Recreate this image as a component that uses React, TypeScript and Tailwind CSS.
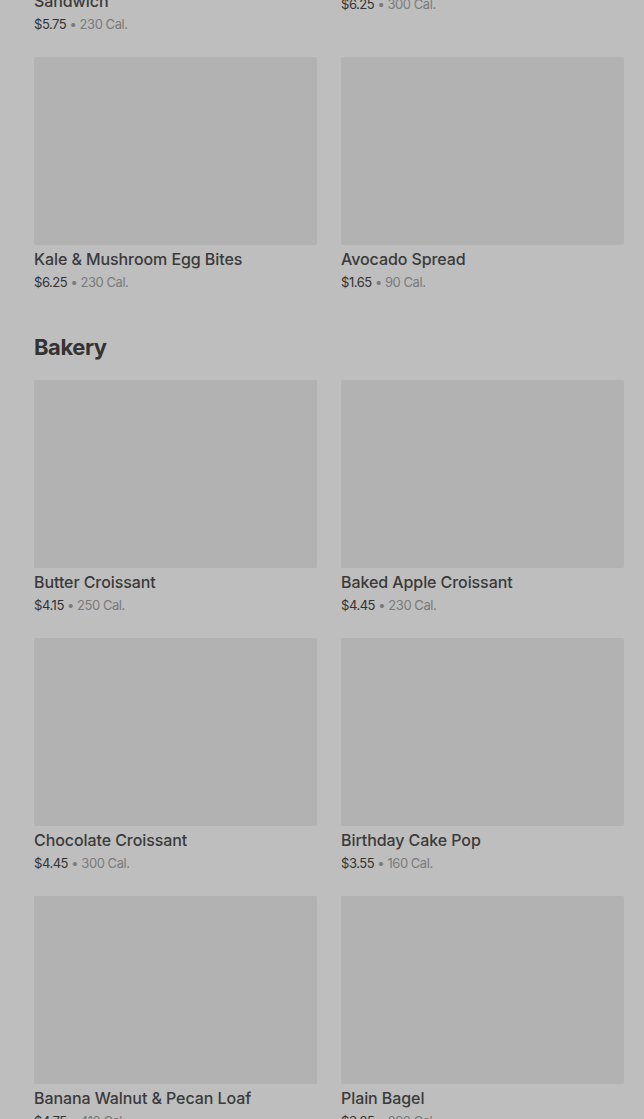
import React from 'react';

type Item = { name: string; price: string; cal: string };

const breakfast: Item[] = [
  { name: 'Bacon, Gouda & Egg Breakfast Sandwich', price: '$5.75', cal: '230 Cal.' },
  { name: 'Impossible™ Breakfast Sandwich', price: '$6.25', cal: '300 Cal.' },
  { name: 'Kale & Mushroom Egg Bites', price: '$6.25', cal: '230 Cal.' },
  { name: 'Avocado Spread', price: '$1.65', cal: '90 Cal.' },
];

const bakery: Item[] = [
  { name: 'Butter Croissant', price: '$4.15', cal: '250 Cal.' },
  { name: 'Baked Apple Croissant', price: '$4.45', cal: '230 Cal.' },
  { name: 'Chocolate Croissant', price: '$4.45', cal: '300 Cal.' },
  { name: 'Birthday Cake Pop', price: '$3.55', cal: '160 Cal.' },
  { name: 'Banana Walnut & Pecan Loaf', price: '$4.75', cal: '410 Cal.' },
  { name: 'Plain Bagel', price: '$3.25', cal: '290 Cal.' },
];

const ProductCard: React.FC<{ item: Item }> = ({ item }) => (
  <div className="flex flex-col">
    <div className="h-[188px] w-full rounded-[2px] bg-[#b2b2b2]" />
    <p className="mt-[4px] text-[16px] leading-5 font-medium tracking-[-0.005em] text-[#3a3a3a]">{item.name}</p>
    <p className="mt-[3px] text-[13px] leading-5 tracking-[-0.035em] text-[#333333]">
      {item.price}
      <span className="text-[#7a7a7a]"> • {item.cal}</span>
    </p>
  </div>
);

const Grid: React.FC<{ items: Item[] }> = ({ items }) => (
  <div className="grid grid-cols-2 gap-x-6 gap-y-[23px]">
    {items.map((item) => (
      <ProductCard key={item.name} item={item} />
    ))}
  </div>
);

export default function App() {
  return (
    <div
      className="h-[1119px] overflow-hidden bg-[#bebebe] pl-[34px] pr-[20px]"
      style={{ fontFamily: 'Inter, "Noto Sans", sans-serif' }}
    >
      <div className="-mt-[221px]">
        {/* Breakfast */}
        <Grid items={breakfast} />

        {/* Bakery */}
        <section className="mt-[39px]">
          <h2 className="mb-[17px] text-[22px] leading-8 font-bold tracking-[-0.02em] text-[#333333]">
            Bakery
          </h2>
          <Grid items={bakery} />
        </section>
      </div>
    </div>
  );
}
